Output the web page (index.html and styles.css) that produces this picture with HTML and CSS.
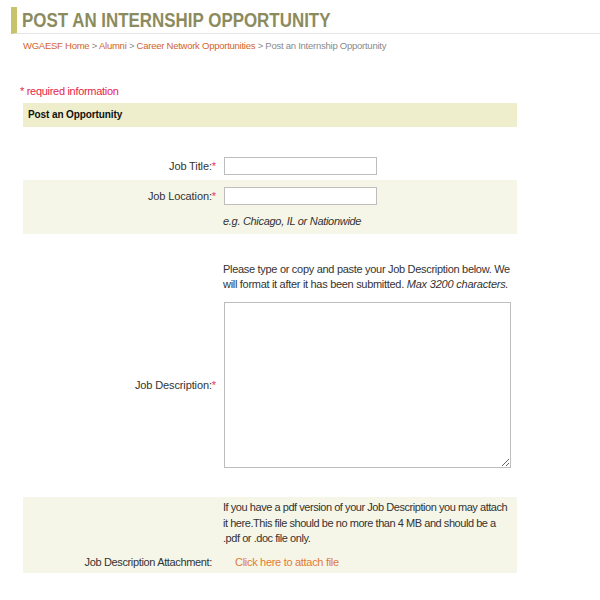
FILE: index.html
```html
<!DOCTYPE html>
<html>
<head>
<meta charset="utf-8">
<link rel="stylesheet" href="styles.css">
</head>
<body>
<h1 class="page-title"><span class="title-text">POST AN INTERNSHIP OPPORTUNITY</span></h1>
<div class="breadcrumb"><a href="#">WGAESF Home</a> &gt; <a href="#">Alumni</a> &gt; <a href="#">Career Network Opportunities</a> &gt; <span class="current">Post an Internship Opportunity</span></div>
<p class="required-note">* required information</p>
<div class="form">
  <div class="section-head">Post an Opportunity</div>
  <div class="row row-title">
    <label class="label">Job Title:<span class="req">*</span></label>
    <div class="field"><input class="text-input" type="text"></div>
  </div>
  <div class="row row-location shaded">
    <label class="label">Job Location:<span class="req">*</span></label>
    <div class="field"><input class="text-input" type="text"></div>
    <div class="label"></div>
    <div class="field hint">e.g. Chicago, IL or Nationwide</div>
  </div>
  <div class="row row-desc">
    <div class="label"></div>
    <p class="field note">Please type or copy and paste your Job Description below. We will format it after it has been submitted. <em>Max 3200 characters.</em></p>
    <label class="label label-mid">Job Description:<span class="req">*</span></label>
    <div class="field"><textarea class="textarea"></textarea></div>
  </div>
  <div class="row row-attach shaded">
    <div class="label"></div>
    <p class="field note attach-note">If you have a pdf version of your Job Description you may attach it here.This file should be no more than 4 MB and should be a .pdf or .doc file only.</p>
    <div class="label attach-label">Job Description Attachment:</div>
    <div class="field"><a class="attach-link" href="#">Click here to attach file</a></div>
  </div>
</div>
</body>
</html>
```
FILE: styles.css
```css
html, body {
  margin: 0;
  padding: 0;
  background: #fff;
}
body {
  font-family: "Liberation Sans", Arial, sans-serif;
  font-size: 11px;
  letter-spacing: -0.3px;
  color: #333;
}
.page-title {
  margin: 7px 0 0 11px;
  height: 26px;
  border-left: 6px solid #c8c46c;
  border-bottom: 1px solid #e6e6e6;
  padding-left: 5px;
  font-size: 21px;
  line-height: 26px;
  font-weight: bold;
  letter-spacing: 0;
  color: #8c8b5d;
  overflow: hidden;
  white-space: nowrap;
}
.title-text {
  display: inline-block;
  transform: scaleX(0.806);
  transform-origin: left center;
}
.breadcrumb {
  margin: 6px 0 0 23px;
  font-size: 9.5px;
  letter-spacing: -0.25px;
  line-height: 12px;
  color: #8a8a8a;
}
.breadcrumb a {
  color: #d2642a;
  text-decoration: none;
}
.required-note {
  margin: 32px 0 0 20px;
  color: #e81c4c;
  line-height: 14px;
}
.form {
  margin: 5px 0 0 23px;
  width: 494px;
}
.section-head {
  height: 24px;
  line-height: 24px;
  background: #eeeecc;
  padding-left: 5px;
  font-weight: bold;
  font-size: 10px;
  letter-spacing: -0.1px;
  color: #111;
  margin-bottom: 23px;
}
.row {
  display: grid;
  grid-template-columns: 193px 294px;
  column-gap: 7px;
  align-items: center;
}
.shaded {
  background: #f6f6e8;
}
.label {
  text-align: right;
  color: #333;
  letter-spacing: -0.12px;
}
.req {
  color: #f0305a;
}
.text-input {
  display: block;
  box-sizing: border-box;
  width: 153px;
  height: 18px;
  margin: 0 0 0 1px;
  border: 1px solid #bdbdbd;
  background: #fff;
  padding: 0 2px;
}
.row-title {
  padding: 7px 0 5px;
  line-height: 14px;
}
.row-location {
  padding: 7px 0 5px;
  row-gap: 9px;
}
.hint {
  font-style: italic;
  line-height: 15px;
}
.row-desc {
  padding: 28px 0 0;
  row-gap: 10px;
}
.note {
  margin: 0;
  line-height: 15px;
  padding-right: 4px;
}
.note em {
  letter-spacing: -0.2px;
}
.attach-note {
  line-height: 15.5px;
  letter-spacing: -0.45px;
  padding-right: 9px;
}
.textarea {
  display: block;
  box-sizing: border-box;
  width: 287px;
  height: 166px;
  margin: 0 0 0 1px;
  border: 1px solid #bdbdbd;
  resize: both;
}
.row-attach {
  margin-top: 29px;
  padding: 3px 0 5px;
  row-gap: 9px;
}
.attach-label {
  padding-right: 4px;
  letter-spacing: -0.35px;
}
.attach-link {
  margin-left: 12px;
  color: #e07a36;
  text-decoration: none;
}
```
